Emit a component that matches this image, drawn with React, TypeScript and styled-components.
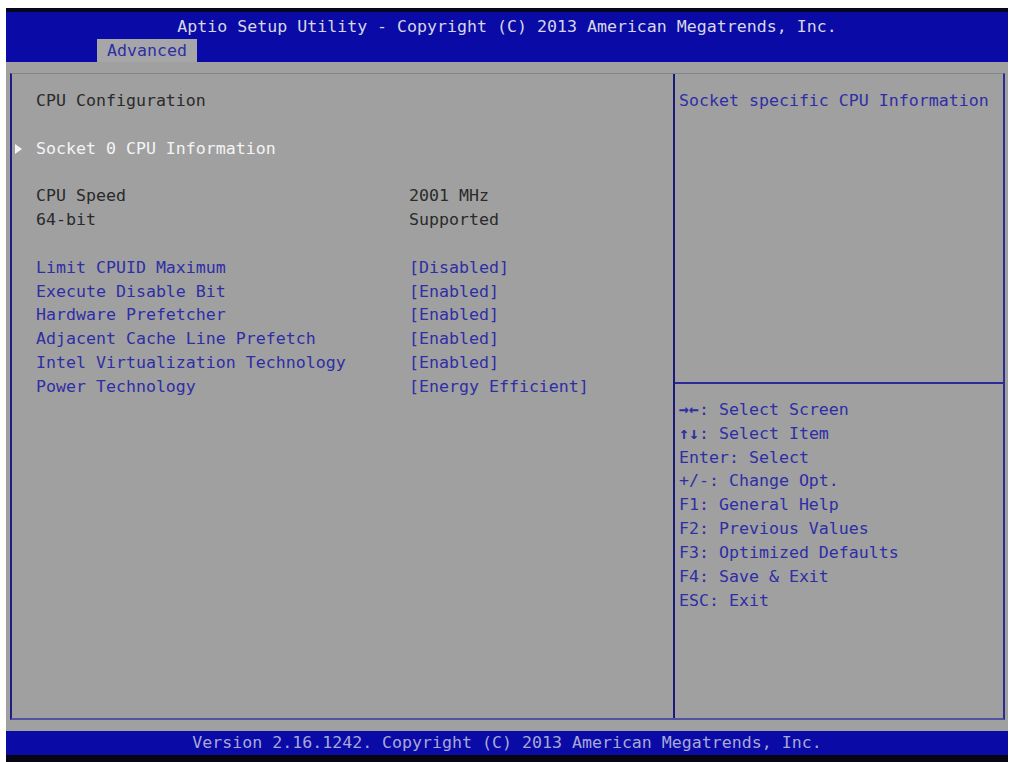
import React from "react";
import styled, { createGlobalStyle } from "styled-components";

const GlobalStyle = createGlobalStyle`
  html, body { margin: 0; padding: 0; background: #ffffff; }
  body { font-family: "DejaVu Sans Mono", monospace; }
`;

const BLUE = "#0a0aa6";
const TEXT_BLUE = "#2e2ea6";
const TEXT_DARK = "#2a2a2a";

const Screen = styled.div`
  margin: 8px 0 0 6px;
  width: 1002px;
  height: 754px;
  box-sizing: border-box;
  display: flex;
  flex-direction: column;
  background: #a0a0a0;
  border-top: 4px solid #06061c;
  border-bottom: 7px solid #060612;
  font-family: "DejaVu Sans Mono", monospace;
  font-size: 16.6px;
  line-height: 23.83px;
  white-space: pre;
`;

const Header = styled.header`
  height: 50px;
  background: ${BLUE};
  display: flex;
  flex-direction: column;
`;

const Title = styled.div`
  height: 27px;
  line-height: 29px;
  text-align: center;
  color: #d6d6e6;
`;

const TabRow = styled.div`
  height: 23px;
  display: flex;
  padding-left: 91px;
`;

const Tab = styled.div`
  width: 100px;
  box-sizing: border-box;
  padding: 0 10px;
  line-height: 24px;
  background: #a6a6a8;
  color: ${TEXT_BLUE};
`;

const Main = styled.main`
  flex: 1;
  padding: 11px 3px 11px 4px;
  display: flex;
`;

const Frame = styled.div`
  flex: 1;
  display: flex;
  border-top: 1px solid #84848e;
  border-left: 2px solid #1e1e84;
  border-right: 2px solid #2c2c92;
  border-bottom: 2px solid #5252a2;
`;

const LeftPane = styled.section`
  width: 661px;
  border-right: 2px solid #1a1a78;
  padding-top: 15px;
  display: flex;
  flex-direction: column;
`;

const RightPane = styled.aside`
  flex: 1;
  display: flex;
  flex-direction: column;
`;

const Row = styled.div<{ $tone: "dark" | "blue" | "white" }>`
  display: grid;
  grid-template-columns: 24px 373px 1fr;
  height: 23.83px;
  color: ${(p) => (p.$tone === "blue" ? TEXT_BLUE : p.$tone === "white" ? "#f4f4f4" : TEXT_DARK)};
`;

const Marker = styled.span`
  display: flex;
  align-items: center;
  padding-left: 3px;
`;

const Arrow = styled.span`
  width: 0;
  height: 0;
  border-top: 5px solid transparent;
  border-bottom: 5px solid transparent;
  border-left: 7px solid #f4f4f4;
`;

const Spacer = styled.div`
  height: 23.83px;
`;

const HelpTop = styled.div`
  height: 310px;
  box-sizing: border-box;
  padding: 15px 0 0 4px;
  border-bottom: 2px solid #2a2a98;
  color: ${TEXT_BLUE};
`;

const KeyList = styled.ul`
  list-style: none;
  margin: 0;
  padding: 14px 0 0 4px;
  color: ${TEXT_BLUE};
`;

const KeyItem = styled.li`
  height: 23.83px;
`;

const KeyGlyph = styled.span`
  font-weight: bold;
`;

const Footer = styled.footer`
  height: 24px;
  line-height: 24px;
  background: ${BLUE};
  color: #a8a8d6;
  text-align: center;
`;

type Item = { label: string; value?: string; tone: "dark" | "blue" | "white"; arrow?: boolean } | null;

const items: Item[] = [
  { label: "CPU Configuration", tone: "dark" },
  null,
  { label: "Socket 0 CPU Information", tone: "white", arrow: true },
  null,
  { label: "CPU Speed", value: "2001 MHz", tone: "dark" },
  { label: "64-bit", value: "Supported", tone: "dark" },
  null,
  { label: "Limit CPUID Maximum", value: "[Disabled]", tone: "blue" },
  { label: "Execute Disable Bit", value: "[Enabled]", tone: "blue" },
  { label: "Hardware Prefetcher", value: "[Enabled]", tone: "blue" },
  { label: "Adjacent Cache Line Prefetch", value: "[Enabled]", tone: "blue" },
  { label: "Intel Virtualization Technology", value: "[Enabled]", tone: "blue" },
  { label: "Power Technology", value: "[Energy Efficient]", tone: "blue" },
];

const keys: { glyph?: string; text: string }[] = [
  { glyph: "→←", text: ": Select Screen" },
  { glyph: "↑↓", text: ": Select Item" },
  { text: "Enter: Select" },
  { text: "+/-: Change Opt." },
  { text: "F1: General Help" },
  { text: "F2: Previous Values" },
  { text: "F3: Optimized Defaults" },
  { text: "F4: Save & Exit" },
  { text: "ESC: Exit" },
];

export default function App() {
  return (
    <>
      <GlobalStyle />
      <Screen>
        <Header>
          <Title>Aptio Setup Utility - Copyright (C) 2013 American Megatrends, Inc.</Title>
          <TabRow>
            <Tab>Advanced</Tab>
          </TabRow>
        </Header>
        <Main>
          <Frame>
            <LeftPane>
              {items.map((it, i) =>
                it ? (
                  <Row key={i} $tone={it.tone}>
                    <Marker>{it.arrow ? <Arrow /> : null}</Marker>
                    <span>{it.label}</span>
                    <span>{it.value ?? ""}</span>
                  </Row>
                ) : (
                  <Spacer key={i} />
                )
              )}
            </LeftPane>
            <RightPane>
              <HelpTop>Socket specific CPU Information</HelpTop>
              <KeyList>
                {keys.map((k) => (
                  <KeyItem key={k.text}>
                    {k.glyph ? <KeyGlyph>{k.glyph}</KeyGlyph> : null}
                    {k.text}
                  </KeyItem>
                ))}
              </KeyList>
            </RightPane>
          </Frame>
        </Main>
        <Footer>Version 2.16.1242. Copyright (C) 2013 American Megatrends, Inc.</Footer>
      </Screen>
    </>
  );
}
